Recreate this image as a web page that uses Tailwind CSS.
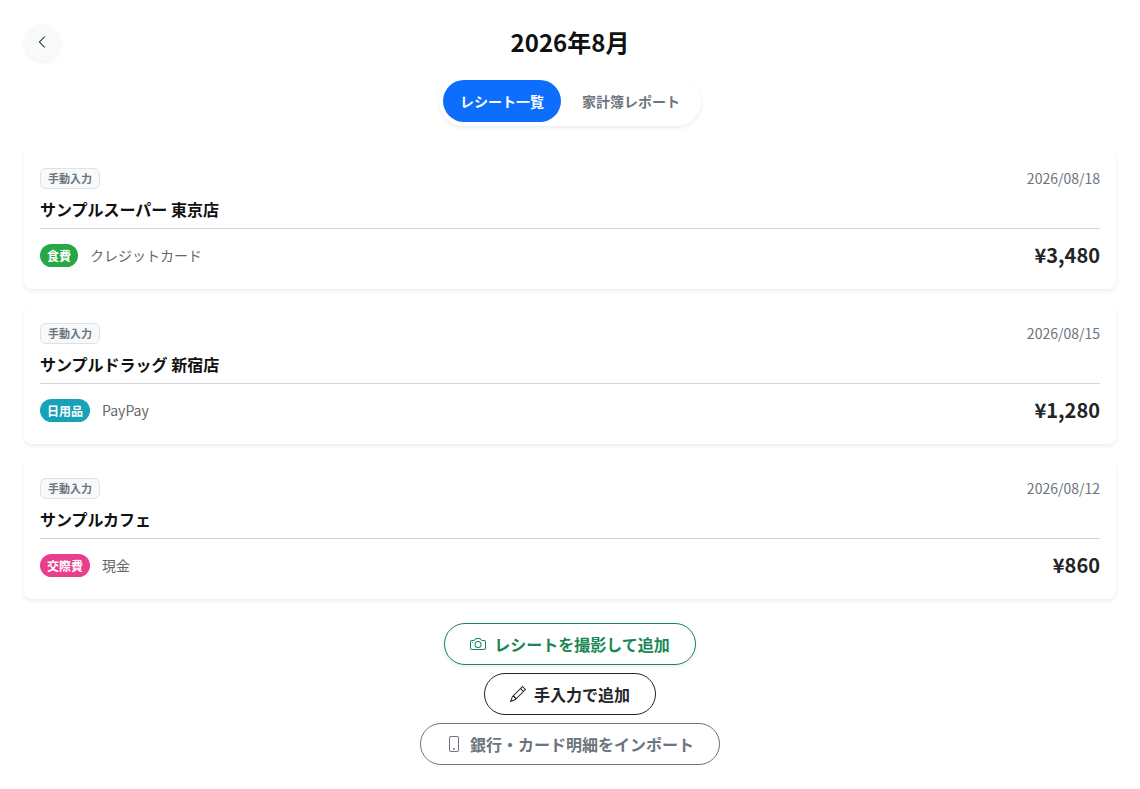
<!DOCTYPE html>
<html lang="ja">
<head>
    <meta charset="UTF-8">
    <meta name="viewport" content="width=device-width, initial-scale=1.0">
    <title>2026年8月 レシート一覧</title>
    <script src="https://cdn.jsdelivr.net/npm/@tailwindcss/browser@4"></script>
</head>
<body class="min-h-screen bg-white font-['Noto_Sans_CJK_JP',sans-serif] text-[#212529]">
    <div class="p-6">
        <!-- Header -->
        <header class="grid grid-cols-[37px_1fr_37px] items-start">
            <button type="button" aria-label="戻る" class="flex h-[37px] w-[37px] items-center justify-center rounded-full bg-[#f8f9fa] pr-px pb-px text-black shadow-[0_2px_4px_rgba(0,0,0,0.05)]">
                <svg class="h-[14px] w-[14px]" viewBox="0 0 16 16" fill="currentColor"><path fill-rule="evenodd" d="M11.354 1.646a.5.5 0 0 1 0 .708L5.707 8l5.647 5.646a.5.5 0 0 1-.708.708l-6-6a.5.5 0 0 1 0-.708l6-6a.5.5 0 0 1 .708 0"/></svg>
            </button>
            <h1 class="text-center text-2xl leading-9 font-bold text-[#111111]">2026年8月</h1>
        </header>

        <!-- Tabs -->
        <nav class="mt-[15px] flex justify-center">
            <div class="flex gap-1 rounded-full bg-white p-1 text-sm font-bold shadow-[0_2px_4px_rgba(0,0,0,0.075)]">
                <button type="button" class="h-[42px] rounded-full bg-[#0d6efd] px-[17px] text-white">レシート一覧</button>
                <button type="button" class="h-[42px] rounded-full px-[17px] text-[#6c757d]">家計簿レポート</button>
            </div>
        </nav>

        <!-- Receipts -->
        <main class="mt-6 space-y-4">
            <article class="rounded-lg bg-white p-4 shadow-[0_2px_4px_rgba(0,0,0,0.075)]">
                <div class="border-b border-[#d3d4d5] pb-[7px]">
                    <div class="flex h-[25px] items-center justify-between">
                        <span class="rounded-md border border-[#dee2e6] bg-[#f8f9fa] px-[7px] text-[11px] leading-[19px] font-bold text-[#6c757d]">手動入力</span>
                        <time datetime="2026-08-18" class="text-sm leading-[21px] text-[#6c757d]">2026/08/18</time>
                    </div>
                    <h2 class="mt-[6px] text-base leading-6 font-bold text-[#111111]">サンプルスーパー 東京店</h2>
                </div>
                <div class="flex h-11 items-center justify-between pt-2">
                    <div class="flex items-center gap-3">
                        <span class="rounded-full bg-[#28a745] px-[7px] text-xs leading-[23px] font-bold text-white">食費</span>
                        <span class="text-sm text-[#666666]">クレジットカード</span>
                    </div>
                    <span class="text-xl font-bold">¥3,480</span>
                </div>
            </article>

            <article class="rounded-lg bg-white p-4 shadow-[0_2px_4px_rgba(0,0,0,0.075)]">
                <div class="border-b border-[#d3d4d5] pb-[7px]">
                    <div class="flex h-[25px] items-center justify-between">
                        <span class="rounded-md border border-[#dee2e6] bg-[#f8f9fa] px-[7px] text-[11px] leading-[19px] font-bold text-[#6c757d]">手動入力</span>
                        <time datetime="2026-08-15" class="text-sm leading-[21px] text-[#6c757d]">2026/08/15</time>
                    </div>
                    <h2 class="mt-[6px] text-base leading-6 font-bold text-[#111111]">サンプルドラッグ 新宿店</h2>
                </div>
                <div class="flex h-11 items-center justify-between pt-2">
                    <div class="flex items-center gap-3">
                        <span class="rounded-full bg-[#17a2b8] px-[7px] text-xs leading-[23px] font-bold text-white">日用品</span>
                        <span class="text-sm text-[#666666]">PayPay</span>
                    </div>
                    <span class="text-xl font-bold">¥1,280</span>
                </div>
            </article>

            <article class="rounded-lg bg-white p-4 shadow-[0_2px_4px_rgba(0,0,0,0.075)]">
                <div class="border-b border-[#d3d4d5] pb-[7px]">
                    <div class="flex h-[25px] items-center justify-between">
                        <span class="rounded-md border border-[#dee2e6] bg-[#f8f9fa] px-[7px] text-[11px] leading-[19px] font-bold text-[#6c757d]">手動入力</span>
                        <time datetime="2026-08-12" class="text-sm leading-[21px] text-[#6c757d]">2026/08/12</time>
                    </div>
                    <h2 class="mt-[6px] text-base leading-6 font-bold text-[#111111]">サンプルカフェ</h2>
                </div>
                <div class="flex h-11 items-center justify-between pt-2">
                    <div class="flex items-center gap-3">
                        <span class="rounded-full bg-[#e83e8c] px-[7px] text-xs leading-[23px] font-bold text-white">交際費</span>
                        <span class="text-sm text-[#666666]">現金</span>
                    </div>
                    <span class="text-xl font-bold">¥860</span>
                </div>
            </article>
        </main>

        <!-- Actions -->
        <div class="mt-6 flex flex-col items-center gap-2 text-base font-bold">
            <button type="button" class="flex h-[42px] items-center gap-2 rounded-full border border-[#198754] bg-white px-[25px] text-[#198754] shadow-[0_2px_4px_rgba(0,0,0,0.075)]">
                <svg class="h-4 w-4" viewBox="0 0 16 16" fill="currentColor"><path d="M15 12a1 1 0 0 1-1 1H2a1 1 0 0 1-1-1V6a1 1 0 0 1 1-1h1.172a3 3 0 0 0 2.12-.879l.83-.828A1 1 0 0 1 6.827 3h2.344a1 1 0 0 1 .707.293l.828.828A3 3 0 0 0 12.828 5H14a1 1 0 0 1 1 1zM2 4a2 2 0 0 0-2 2v6a2 2 0 0 0 2 2h12a2 2 0 0 0 2-2V6a2 2 0 0 0-2-2h-1.172a2 2 0 0 1-1.414-.586l-.828-.828A2 2 0 0 0 9.172 2H6.828a2 2 0 0 0-1.414.586l-.828.828A2 2 0 0 1 3.172 4z"/><path d="M8 11a2.500 2.500 0 1 1 0-5 2.500 2.500 0 0 1 0 5m0 1a3.500 3.500 0 1 0 0-7 3.500 3.500 0 0 0 0 7M3 6.500a.5.5 0 1 1-1 0 .5.5 0 0 1 1 0"/></svg>
                レシートを撮影して追加
            </button>
            <button type="button" class="flex h-[42px] items-center gap-2 rounded-full border border-[#212529] bg-white px-[25px] text-[#212529]">
                <svg class="h-4 w-4" viewBox="0 0 16 16" fill="currentColor"><path d="M12.146.146a.5.5 0 0 1 .708 0l3 3a.5.5 0 0 1 0 .708l-10 10a.5.5 0 0 1-.168.110l-5 2a.5.5 0 0 1-.65-.65l2-5a.5.5 0 0 1 .11-.168zM11.207 2.500 13.500 4.793 14.793 3.500 12.500 1.207zm1.586 3L10.500 3.207 4 9.707V10h.5a.5.5 0 0 1 .5.5v.5h.5a.5.5 0 0 1 .5.5v.5h.293zm-9.761 5.175-.106.106-1.528 3.821 3.821-1.528.106-.106A.5.5 0 0 1 5 12.500V12h-.5a.5.5 0 0 1-.5-.5V11h-.5a.5.5 0 0 1-.468-.325"/></svg>
                手入力で追加
            </button>
            <button type="button" class="flex h-[42px] items-center gap-2 rounded-full border border-[#6c757d] bg-white px-[25px] text-[#6c757d]">
                <svg class="h-4 w-4" viewBox="0 0 16 16" fill="currentColor"><path d="M11 1a1 1 0 0 1 1 1v12a1 1 0 0 1-1 1H5a1 1 0 0 1-1-1V2a1 1 0 0 1 1-1zM5 0a2 2 0 0 0-2 2v12a2 2 0 0 0 2 2h6a2 2 0 0 0 2-2V2a2 2 0 0 0-2-2z"/><path d="M8 14a1 1 0 1 0 0-2 1 1 0 0 0 0 2"/></svg>
                銀行・カード明細をインポート
            </button>
        </div>
    </div>
</body>
</html>
